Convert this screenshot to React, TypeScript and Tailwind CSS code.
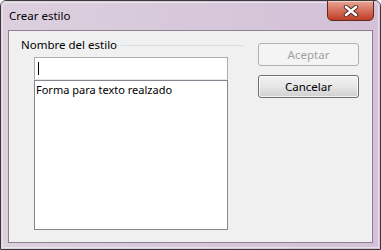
import React from "react";

export default function App() {
  return (
    <div
      className="w-[381px] h-[250px] relative overflow-hidden rounded-t-[6px] border border-[#3a3a3a] flex flex-col"
      style={{ fontFamily: '"Noto Sans", "Open Sans", sans-serif' }}
    >
      <div className="absolute inset-0 bg-gradient-to-r from-[#dcd0de] via-[#d6c8da] to-[#d4c0d8]" />
      <div className="absolute inset-[1px] rounded-t-[5px] border border-[#f3ecf4]/70" />
      {/* title bar */}
      <div className="relative h-[29px] flex items-start">
        <span className="ml-[8px] mt-[7px] text-[11.5px] leading-[16px] text-black">Crear estilo</span>
        <div className="ml-auto mr-[6px] mt-[-1px] w-[47px] h-[21px] rounded-b-[5px] border border-[#5a2a20] bg-gradient-to-b from-[#e8a596] via-[#d4705c] to-[#c23c22] flex items-center justify-center shadow-[inset_0_1px_0_rgba(255,255,255,0.5)]">
          <svg width="16" height="12" viewBox="0 0 16 12">
            <path d="M3 2 L13 10 M13 2 L3 10" stroke="#4a2a26" strokeWidth="4.4" strokeLinecap="round" />
            <path d="M3 2 L13 10 M13 2 L3 10" stroke="#ffffff" strokeWidth="2.6" strokeLinecap="round" />
          </svg>
        </div>
      </div>
      {/* client area */}
      <div className="relative mx-[7px] h-[213px] border border-[#8e7f92] bg-[#f0f0f0] flex items-start pt-[7px] text-[11px] text-black">
        <div className="ml-[12px] w-[222px] flex flex-col">
          <div className="flex items-center h-[14px]">
            <span className="leading-[14px] text-[11.5px]">Nombre del estilo</span>
            <div className="ml-[4px] flex-1 h-px bg-[#d5dfe5]" />
          </div>
          <div className="ml-[13px] mt-[5px] w-[194px] flex flex-col">
            <div className="h-[23px] bg-white border border-[#abadb3] border-b-[#e3e9ef] flex items-center pl-[3px]">
              <div className="w-px h-[13px] bg-black" />
            </div>
            <div className="h-[150px] bg-white border border-[#828790] pl-[1px] pt-[1px]">
              <div className="leading-[16px]">Forma para texto realzado</div>
            </div>
          </div>
        </div>
        <div className="ml-[15px] mt-[5px] flex flex-col gap-[9px] text-[11.5px]">
          <div className="w-[101px] h-[23px] rounded-[3px] border border-[#adb2b5] bg-[#f4f4f4] flex items-center justify-center text-[#a0a0a0]">
            Aceptar
          </div>
          <div className="w-[101px] h-[23px] rounded-[3px] border border-[#707070] bg-gradient-to-b from-[#f2f2f2] via-[#e6e6e6] to-[#d0d0d0] flex items-center justify-center shadow-[inset_0_0_0_1px_rgba(255,255,255,0.7)]">
            Cancelar
          </div>
        </div>
      </div>
    </div>
  );
}
